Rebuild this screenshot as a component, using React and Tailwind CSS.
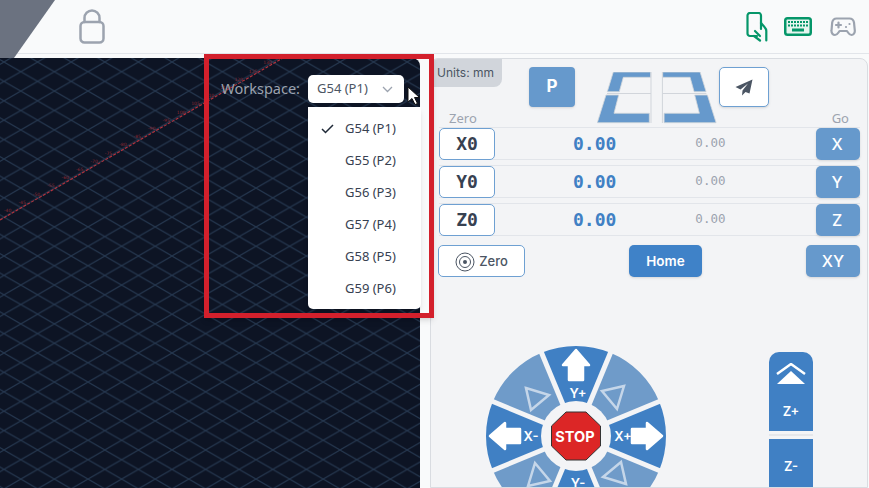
import React from "react";

const sans = "font-['Noto_Sans',sans-serif]";
const inter = "font-['Inter',sans-serif]";
const mono = "font-['DejaVu_Sans_Mono',monospace]";

const axes = [
  { zero: "X0", go: "X" },
  { zero: "Y0", go: "Y" },
  { zero: "Z0", go: "Z" },
];

const workspaces = ["G54 (P1)", "G55 (P2)", "G56 (P3)", "G57 (P4)", "G58 (P5)", "G59 (P6)"];

// one slice of the jog wheel, centred on the straight up direction
const slice = (r1, r2, half) => {
  const a = (half * Math.PI) / 180;
  const p = (r, s) => `${(s * r * Math.sin(a)).toFixed(2)} ${(-r * Math.cos(a)).toFixed(2)}`;
  return `M${p(r1, -1)} L${p(r2, -1)} A${r2} ${r2} 0 0 1 ${p(r2, 1)} L${p(r1, 1)} A${r1} ${r1} 0 0 0 ${p(r1, -1)}Z`;
};

const PhoneIcon = () => (
  <svg width="22" height="30" viewBox="0 0 22 30" fill="none" stroke="#059669" strokeWidth="2.200" strokeLinecap="round" strokeLinejoin="round">
    <path d="M11 24H4a2.500 2.500 0 0 1-2.500-2.500V3.500A2.500 2.500 0 0 1 4 1h8.500A2.500 2.500 0 0 1 15 3.500V17" />
    <path d="M15 11l3.500 4c1.200 1.300 1.800 2.500 1.800 4V28.500" />
    <path d="M8 24l6 4.500" />
    <path d="M9 19l5 5" />
  </svg>
);

const KeyboardIcon = () => (
  <svg width="28" height="19" viewBox="0 0 28 19">
    <rect x="0" y="0" width="28" height="19" rx="3.500" fill="#059669" />
    <rect x="2.500" y="2.500" width="23" height="14" rx="1" fill="#e6f5ef" />
    {[4, 7, 10, 13, 16, 19, 22].map((x) => (
      <rect key={x} x={x} y="4" width="2" height="2" fill="#059669" />
    ))}
    {[4, 7, 10, 13, 16, 19, 22].map((x) => (
      <rect key={x} x={x} y="7.500" width="2" height="2" fill="#059669" />
    ))}
    <rect x="8" y="11.500" width="12" height="3" fill="#059669" />
  </svg>
);

const GamepadIcon = () => (
  <svg width="26" height="20" viewBox="0 0 26 20" fill="none" stroke="#9ca3af" strokeWidth="2.200" strokeLinecap="round" strokeLinejoin="round">
    <path d="M6.500 1.500h13c2.500 0 4 1.500 4.500 4l.8 8c.2 2.500-1.300 4.500-3.300 4.500-1.500 0-2.500-1-3.500-2.500l-1-1.500H9.500l-1 1.500C7.500 17 6.500 18 5 18c-2 0-3.800-2-3.500-4.500l.7-8C2.700 3 4 1.500 6.500 1.500z" />
    <path d="M6 8h5M8.500 5.500v5" />
    <path d="M16 10h.01M19.500 7h.01" />
  </svg>
);

const LockIcon = () => (
  <svg width="26" height="35" viewBox="0 0 26 35" fill="none" stroke="#9ca3af" strokeWidth="2.500" strokeLinecap="round" strokeLinejoin="round">
    <rect x="1.500" y="13" width="23" height="20.500" rx="4" />
    <path d="M5.500 13V9a7.500 7.500 0 0 1 15 0v4" />
  </svg>
);

const PlaneIcon = () => (
  <svg width="18" height="17" viewBox="0 0 18 17" fill="#4b5563">
    <path d="M17.500 0.500 L0.500 8 L5.500 10.500 L13 4.500 L7.500 11.500 L7 16.500 L10.500 13 L14.500 14.500Z" />
  </svg>
);

const TargetIcon = () => (
  <svg width="20" height="20" viewBox="0 0 20 20" fill="none" stroke="#4b5563">
    <circle cx="10" cy="10" r="9" strokeWidth="1" />
    <circle cx="10" cy="10" r="5.500" strokeWidth="1" />
    <circle cx="10" cy="10" r="2" fill="#4b5563" stroke="none" />
  </svg>
);

const PadIcon = () => {
  const left = [
    "16.300,0 53.700,0 53.700,5.300 26.300,5.300 22.300,19.700 10.300,19.700",
    "9,23 21.700,23 17,41.300 52.300,41.300 52.300,50.700 0.300,50.700",
  ];
  return (
    <svg width="120" height="52" viewBox="0 0 120 52" className="block">
      {[0, 1].map((side) => (
        <g key={side} transform={side ? "translate(119.400 0) scale(-1 1)" : undefined}>
          {left.map((pts) => (
            <polygon key={pts} points={pts} fill="#6699cc" stroke="#d1d5db" strokeWidth="0.800" />
          ))}
          <path d="M54 0V51M10 21.500H54" stroke="#d1d5db" strokeWidth="1" fill="none" />
        </g>
      ))}
    </svg>
  );
};

const JogWheel = () => {
  const ring = [0, 45, 90, 135, 180, 225, 270, 315];
  return (
    <svg width="182" height="182" viewBox="-91 -91 182 182" className="block">
      {ring.map((deg) => (
        <path
          key={deg}
          d={slice(33, 90, 22.500)}
          transform={`rotate(${deg})`}
          fill={deg % 90 === 0 ? "#4080c4" : "#6f9bc9"}
        />
      ))}
      {/* the gaps between the slices */}
      {ring.map((deg) => (
        <line key={deg} x1="0" y1="-30" x2="0" y2="-92" transform={`rotate(${deg + 22.500})`} stroke="#f3f4f6" strokeWidth="5" />
      ))}
      <circle r="35" fill="#f3f4f6" />
      {[0, 90, 180, 270].map((deg) => (
        <polygon
          key={deg}
          points="-50,-48 -27,-41 -45,-26"
          transform={`rotate(${deg})`}
          fill="none"
          stroke="#c5d6e9"
          strokeWidth="2.500"
        />
      ))}
      {[0, 90, 180, 270].map((deg) => (
        <polygon
          key={deg}
          points="0,-86 13,-71 7,-71 7,-56 -7,-56 -7,-71 -13,-71"
          transform={`rotate(${deg})`}
          fill="#fff"
          stroke="#fff"
          strokeWidth="2.500"
          strokeLinejoin="round"
        />
      ))}
      <g fill="#fff" fontFamily="Inter, sans-serif" fontSize="13" fontWeight="600" textAnchor="middle">
        <text x="2" y="-38">Y+</text>
        <text x="2" y="52">Y-</text>
        <text x="-45" y="5">X-</text>
        <text x="47" y="5">X+</text>
      </g>
      <polygon
        points="-10,-24 10,-24 24.500,-10 24.500,10 10,24 -10,24 -24.500,10 -24.500,-10"
        fill="#dc2626"
        stroke="#333"
        strokeWidth="1"
      />
      <text x="-1" y="5.500" fill="#fff" fontFamily="Inter, sans-serif" fontSize="14.500" fontWeight="700" textAnchor="middle">
        STOP
      </text>
    </svg>
  );
};

const IsoGrid = () => {
  const ticks = ["-40", "-45", "-50", "-55", "-60", "-65", "-70", "-75", "-80", "-85", "-90", "-95", "100", "105", "110", "115", "120", "125", "130"];
  return (
    <svg className="absolute inset-0" width="420" height="430">
      <defs>
        <pattern id="iso" width="33.600" height="19.400" patternUnits="userSpaceOnUse" x="4" y="4">
          <path d="M0 0L33.600 19.400M33.600 0L0 19.400" stroke="#25374f" strokeWidth="1.100" />
        </pattern>
      </defs>
      <rect width="420" height="430" fill="#0d1424" />
      <rect width="420" height="430" fill="url(#iso)" />
      <line x1="0" y1="162" x2="283" y2="0" stroke="#b8323c" strokeWidth="1.100" strokeDasharray="3 1.500" />
      {ticks.map((t, i) => (
        <text key={t} x={4 + i * 14.400} y={154 - i * 8.200} fill="#8a2a35" fontSize="4.500" fontFamily="DejaVu Sans, sans-serif">
          {t}
        </text>
      ))}
    </svg>
  );
};

export default function App() {
  return (
    <div className={`relative h-[488px] w-[869px] overflow-hidden bg-[#f9fafb] ${sans}`}>
      {/* header */}
      <div className="flex h-[54px] items-center border-b border-[#e2e5ea] pr-[13px]">
        <div className="mb-[1px] ml-[79px]">
          <LockIcon />
        </div>
        <div className="ml-auto flex items-center">
          <PhoneIcon />
          <div className="ml-[16px]">
            <KeyboardIcon />
          </div>
          <div className="ml-[18px]">
            <GamepadIcon />
          </div>
        </div>
      </div>
      <svg className="absolute left-0 top-0" width="56" height="58">
        <polygon points="0,0 55,0 14,58 0,58" fill="#6b7280" />
      </svg>

      <div className="mt-[4px] flex">
        {/* viewer */}
        <div className="relative flex h-[430px] w-[420px] justify-end overflow-hidden rounded-tr-lg">
          <IsoGrid />
          <div className="relative mt-[17px] flex h-[28px] items-center pr-[16px]">
            <span className="text-[14.500px] text-[#9ca3af]">Workspace:</span>
            <div className="ml-[8px] flex h-[28px] w-[96px] items-center justify-between rounded-[5px] bg-white pl-[9px] pr-[11px] text-[13px] text-[#4b5563]">
              <span>G54 (P1)</span>
              <svg width="11" height="7" viewBox="0 0 11 7" fill="none" stroke="#9ca3af" strokeWidth="1.300">
                <path d="M1 1l4.500 4.500L10 1" />
              </svg>
            </div>
          </div>
        </div>

        {/* control panel */}
        <div className="ml-[10px] mr-[1px] h-[430px] flex-1 overflow-hidden rounded-tl-lg rounded-tr-lg border border-[#d9dce1] bg-[#f3f4f6]">
          <div className="relative pl-[8px] pr-[7px]">
            <div className={`absolute left-0 top-0 flex h-[28px] w-[71px] items-center justify-end rounded-br-lg bg-[#d1d5db] pr-[8px] text-[12px] text-[#4b5563] ${inter}`}>
              Units: mm
            </div>
            <div className="flex h-[50px] items-start pt-[8px]">
              <div className={`ml-[90px] flex h-[40px] w-[46px] items-center justify-center rounded-[4px] bg-[#6699cc] text-[17px] font-bold text-white shadow-sm ${inter}`}>
                P
              </div>
              <div className="ml-[22px] mt-[5px]">
                <PadIcon />
              </div>
              <div className="ml-[2px] flex h-[40px] w-[50px] items-center justify-center rounded-[5px] border border-[#6ea0d2] bg-white shadow-sm">
                <PlaneIcon />
              </div>
            </div>
            <div className="flex h-[18px] justify-between pl-[10px] pr-[11px] text-[13px] text-[#9ca3af]">
              <span>Zero</span>
              <span>Go</span>
            </div>
            <div className="flex flex-col gap-[5px]">
              {axes.map((a) => (
                <div key={a.zero} className="flex h-[33px] items-center border-y border-[#e2e5ea]">
                  <button className={`flex h-[32px] w-[56px] items-center justify-center rounded-[5px] border border-[#6ea0d2] bg-white text-[18px] font-semibold text-[#374151] ${mono}`}>
                    {a.zero}
                  </button>
                  <span className={`ml-[78px] text-[18px] font-bold text-[#4080c4] ${mono}`}>0.00</span>
                  <span className={`ml-[79px] text-[12.500px] text-[#9ca3af] ${mono}`}>0.00</span>
                  <button className={`ml-auto flex h-[32px] w-[44px] items-center justify-center rounded-[5px] bg-[#6699cc] pr-[2px] text-[16px] font-medium text-white shadow-sm ${inter}`}>
                    {a.go}
                  </button>
                </div>
              ))}
            </div>
            <div className={`-ml-[1px] mt-[9px] flex items-center ${inter}`}>
              <button className="flex h-[32px] w-[87px] items-center justify-center gap-[4px] rounded-[5px] border border-[#6ea0d2] bg-white pt-[1px] text-[13px] font-medium text-[#4b5563]">
                <TargetIcon />
                Zero
              </button>
              <button className="ml-[104px] h-[32px] w-[73px] rounded-[5px] bg-[#3f82c8] text-[13.500px] font-semibold text-white shadow-sm">
                Home
              </button>
              <button className="ml-[104px] h-[32px] w-[54px] rounded-[5px] bg-[#6699cc] text-[16px] font-medium text-white shadow-sm">
                XY
              </button>
            </div>
          </div>

          <div className="mt-[68px] flex items-start">
            <div className="ml-[54px]">
              <JogWheel />
            </div>
            <div className={`ml-[102px] mt-[7px] w-[44px] text-[13px] font-semibold text-white ${inter}`}>
              <div className="flex h-[79px] flex-col items-center rounded-t-[10px] bg-[#4080c4] pt-[11px]">
                <svg width="30" height="22" viewBox="0 0 30 22">
                  <path d="M1 11L15 1l14 10" fill="none" stroke="#fff" strokeWidth="2.500" />
                  <polygon points="15,8 29,21 1,21" fill="#fff" />
                </svg>
                <span className="mt-[17px]">Z+</span>
              </div>
              <div className="my-[3px] h-[2px] bg-[#e5e7eb]" />
              <div className="flex h-[60px] flex-col items-center bg-[#4080c4] pt-[18px]">
                <span>Z-</span>
              </div>
            </div>
          </div>
        </div>
      </div>

      {/* open workspace list */}
      <div className="absolute left-[308px] top-[107px] w-[113px] rounded-b-[5px] bg-white pb-[4px] pt-[6px] text-[13px] text-[#374151] shadow-md">
        {workspaces.map((w, i) => (
          <div key={w} className="relative flex h-[32px] items-center pl-[37px]">
            {i === 0 && (
              <svg className="absolute left-[13px] top-[11px]" width="13" height="10" viewBox="0 0 13 10" fill="none" stroke="#1f2937" strokeWidth="1.500">
                <path d="M1 5l3.500 3.500L12 1" />
              </svg>
            )}
            {w}
          </div>
        ))}
      </div>

      {/* mouse pointer */}
      <svg className="absolute left-[407px] top-[86px]" width="13" height="20" viewBox="0 0 13 20">
        <path d="M1 1v15l4-3.500 3 6 2.500-1-3-6h5z" fill="#fff" stroke="#111" strokeWidth="1" />
      </svg>

      {/* red annotation box */}
      <div className="pointer-events-none absolute left-[204px] top-[54px] h-[264px] w-[230px] border-[5px] border-[#d3202c] shadow-md" />
    </div>
  );
}
